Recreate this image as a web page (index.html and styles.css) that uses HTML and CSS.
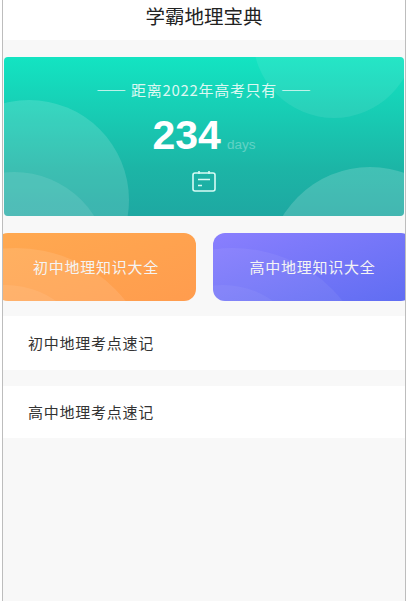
FILE: index.html
```html
<!DOCTYPE html>
<html lang="zh">
<head>
<meta charset="utf-8">
<title>学霸地理宝典</title>
<link rel="stylesheet" href="styles.css">
</head>
<body>
<div class="frame">
  <header class="header">学霸地理宝典</header>
  <section class="hero">
    <svg class="hero-bg" viewBox="0 0 400 159" aria-hidden="true">
      <circle cx="330" cy="-20" r="81" fill="#fff" fill-opacity=".08"/>
      <circle cx="25" cy="143" r="100" fill="#fff" fill-opacity=".14"/>
      <circle cx="10" cy="210" r="95" fill="#fff" fill-opacity=".1"/>
      <circle cx="366" cy="212" r="102" fill="#fff" fill-opacity=".17"/>
    </svg>
    <div class="hero-title">—— 距离2022年高考只有 ——</div>
    <div class="count"><span class="num">234</span><span class="days">days</span></div>
    <svg class="cal" viewBox="0 0 24 22" fill="none" stroke="#d8fbf5" stroke-width="1.6" aria-hidden="true">
      <rect x="1" y="3" width="22" height="18" rx="2"/>
      <path d="M7 1v3M17 1v3M6 9.5h12M6 15.5h4"/>
    </svg>
  </section>
  <div class="cards">
    <div class="card orange">
      <svg class="card-bg" viewBox="0 0 200 68" aria-hidden="true">
        <circle cx="20" cy="155" r="140" fill="#fff" fill-opacity=".1"/>
        <circle cx="10" cy="138" r="86" fill="#fff" fill-opacity=".08"/>
      </svg>
      <span>初中地理知识大全</span>
    </div>
    <div class="card purple">
      <svg class="card-bg" viewBox="0 0 200 68" aria-hidden="true">
        <circle cx="20" cy="155" r="140" fill="#fff" fill-opacity=".06"/>
        <circle cx="10" cy="138" r="86" fill="#fff" fill-opacity=".05"/>
      </svg>
      <span>高中地理知识大全</span>
    </div>
  </div>
  <div class="row first">初中地理考点速记</div>
  <div class="row second">高中地理考点速记</div>
</div>
</body>
</html>
```

FILE: styles.css
```css
* { box-sizing: border-box; }
html, body { margin: 0; height: 100%; background: #fff; }
body { overflow: hidden; font-family: "Noto Sans CJK SC", "Liberation Sans", sans-serif; }
.frame {
  margin-left: 2px;
  width: 404px;
  height: 601px;
  border-left: 1px solid #bdbdbd;
  border-right: 1px solid #bdbdbd;
  background: #f8f8f8;
  overflow: hidden;
}
.header {
  height: 40px;
  background: #fff;
  text-align: center;
  font-size: 19.5px;
  line-height: 32px;
  color: #222;
}
.hero {
  position: relative;
  margin: 17px 0 0 1px;
  width: 400px;
  height: 159px;
  border-radius: 4px;
  overflow: hidden;
  background: linear-gradient(180deg, #13e4c2 0%, #1cb5a6 70%, #1ea8a2 100%);
  display: flex;
  flex-direction: column;
  align-items: center;
  color: #fff;
}
.hero-bg { position: absolute; inset: 0; width: 100%; height: 100%; }
.hero-title, .count, .cal { position: relative; }
.hero-title {
  margin-top: 23px;
  font-size: 15px;
  letter-spacing: .7px;
  white-space: nowrap;
  line-height: 20px;
  color: #dcf8f2;
}
.count {
  margin-top: 13px;
  height: 44px;
  display: flex;
  align-items: baseline;
  font-family: "Liberation Sans", sans-serif;
}
.num { font-size: 41px; font-weight: 700; line-height: 44px; }
.days { font-size: 13.5px; margin-left: 6px; color: #fff; opacity: .3; }
.cal { margin-top: 13px; width: 24px; height: 22px; }
.cards {
  margin-top: 17px;
  display: flex;
  gap: 16.5px;
  height: 68px;
  margin-left: -7px;
}
.card {
  position: relative;
  width: 200px;
  flex: none;
  display: flex;
  align-items: center;
  justify-content: center;
  overflow: hidden;
  border-radius: 12px;
  font-size: 15px;
  letter-spacing: .75px;
  padding-bottom: 1px;
  color: #f4f4f4;
}
.card span { position: relative; }
.card-bg { position: absolute; inset: 0; width: 100%; height: 100%; }
.orange { background: linear-gradient(160deg, #ffa950, #ff9c4e); }
.purple { background: linear-gradient(160deg, #8a7ffe, #5f6df2); }
.row {
  background: #fff;
  padding: 0 0 1px 25px;
  font-size: 15px;
  letter-spacing: .75px;
  color: #333;
  display: flex;
  align-items: center;
}
.first { margin-top: 15px; height: 54px; }
.second { margin-top: 16px; height: 52px; }
```
